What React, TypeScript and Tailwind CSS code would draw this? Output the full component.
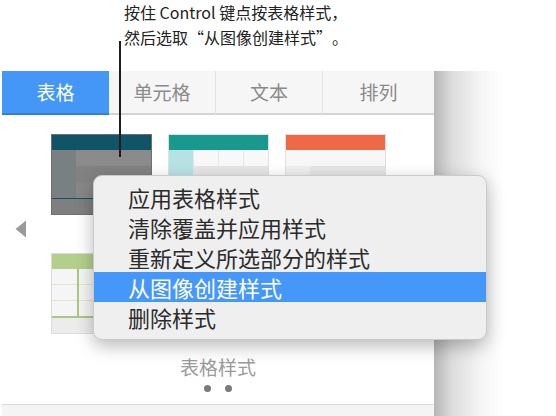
import React from "react";

const tabs = ["表格", "单元格", "文本", "排列"];
const menuItems = ["应用表格样式", "清除覆盖并应用样式", "重新定义所选部分的样式", "从图像创建样式", "删除样式"];

function DarkThumb() {
  return (
    <div className="w-[101px] h-[81px] border border-[#6f6f6f] bg-[#858585] flex flex-col">
      <div className="h-[15px] bg-[#0f5467]" />
      <div className="flex flex-1">
        <div className="w-[24px] bg-[#798082]" />
        <div className="flex-1 flex flex-col">
          <div className="h-[16px] bg-[#8b8b8b]" />
          <div className="h-[16px] bg-[#828282]" />
          <div className="h-[16px] bg-[#878787]" />
        </div>
      </div>
      <div className="h-[1px] bg-[#0f5467]" />
      <div className="h-[16px] bg-[#7f7f7f]" />
    </div>
  );
}

function TealThumb() {
  return (
    <div className="w-[101px] h-[81px] border border-[#e0e0e0] bg-[#f7f7f7] flex flex-col">
      <div className="h-[15px] bg-[#17998d]" />
      <div className="flex flex-1">
        <div className="w-[24px] bg-[#b5e3e4]" />
        {[0, 1, 2].map((c) => (
          <div key={c} className="flex-1 flex flex-col border-l border-[#e6e6e6]">
            <div className="h-[16px] bg-[#f8f8f8]" />
            <div className="h-[16px] bg-[#e6e6e6]" />
            <div className="h-[16px] bg-[#f4f4f4]" />
            <div className="flex-1 bg-[#e6e6e6]" />
          </div>
        ))}
      </div>
    </div>
  );
}

function OrangeThumb() {
  return (
    <div className="w-[101px] h-[81px] border border-[#e0e0e0] bg-[#f7f7f7] flex flex-col">
      <div className="h-[15px] bg-[#ef6946]" />
      <div className="h-[16px] bg-[#f7f7f7]" />
      <div className="flex h-[16px]">
        <div className="w-[24px] bg-[#efefef]" />
        <div className="flex-1 bg-[#e5e5e5]" />
      </div>
      <div className="flex-1 bg-[#f2f2f2]" />
    </div>
  );
}

function GreenThumb() {
  return (
    <div className="w-[101px] h-[81px] border border-[#dcdcdc] bg-[#f5f5f5] flex flex-col">
      <div className="h-[15px] bg-[#b2d08b]" />
      <div className="flex flex-1">
        <div className="w-[25px] flex flex-col">
          <div className="h-[16px] border-b border-[#dce8cb]" />
          <div className="h-[16px] border-b border-[#dce8cb]" />
          <div className="flex-1" />
        </div>
        <div className="w-[2px] bg-[#a9c982]" />
        <div className="flex-1 flex flex-col">
          <div className="h-[16px] border-b border-[#dce8cb]" />
          <div className="h-[16px] border-b border-[#dce8cb]" />
          <div className="flex-1" />
        </div>
      </div>
      <div className="h-[2px] bg-[#a9c982]" />
      <div className="h-[15px] bg-[#ececec]" />
    </div>
  );
}

export default function App() {
  return (
    <div
      className="relative w-[556px] h-[416px] overflow-hidden bg-white flex flex-col"
      style={{ fontFamily: '"Noto Sans CJK SC", "Noto Sans", sans-serif' }}
    >
      <div className="h-[71px] pl-[124px] text-[16px] leading-[25px] text-[#222]">
        <p>按住 Control 键点按表格样式，</p>
        <p>
          然后选取<span className="inline-block w-[16px] text-right">“</span>从图像创建样式
          <span className="inline-block w-[16px] text-left">”</span>。
        </p>
      </div>

      <div className="flex flex-1">
        <div className="ml-[2px] w-[432px] flex flex-col bg-white">
          <div className="flex h-[44px]">
            {tabs.map((t, i) => (
              <div
                key={t}
                className={
                  i === 0
                    ? "w-[107px] flex items-center justify-center bg-[#4497f6] border-b-2 border-[#2f7fdc] text-white text-[19px]"
                    : i === 3
                      ? "flex-1 flex items-center justify-center bg-[#f6f6f6] border-b-2 border-[#d3d3d3] text-[#8a8a8a] text-[19px]"
                      : "w-[107px] flex items-center justify-center bg-[#f6f6f6] border-b-2 border-r border-[#d3d3d3] border-r-[#e2e2e2] text-[#8a8a8a] text-[19px]"
                }
              >
                {t}
              </div>
            ))}
          </div>

          <div className="relative flex-1 flex flex-col items-center">
            <div className="mt-[19px] grid grid-cols-[101px_101px_101px] gap-x-[16px] gap-y-[38px] ml-[1px]">
              <DarkThumb />
              <TealThumb />
              <OrangeThumb />
              <GreenThumb />
              <TealThumb />
              <OrangeThumb />
            </div>
            <div className="mt-[21px] text-[19px] leading-[24px] text-[#9b9b9b]">表格样式</div>
            <div className="mt-[6px] flex gap-[14px]">
              <span className="w-[7px] h-[7px] rounded-full bg-[#7a7a7a]" />
              <span className="w-[7px] h-[7px] rounded-full bg-[#7a7a7a]" />
            </div>
            <svg className="absolute left-[13px] top-[105px]" width="12" height="18" viewBox="0 0 12 18">
              <path d="M11 0.5 L0.5 9 L11 17.5 Z" fill="#9a9a9a" />
            </svg>
          </div>

          <div className="h-[12px] border-t border-[#d9d9d9] bg-[#f4f4f4]" />
        </div>
        <div className="flex-1 bg-[linear-gradient(to_right,#b6b6b6_0px,#dcdcdc_18px,#f4f4f4_45px,#ffffff_70px)]" />
      </div>

      <div className="absolute left-[119px] top-[41px] w-[2px] h-[116px] bg-[#1e1e1e]" />

      <div className="absolute left-[93px] top-[175px] w-[394px] h-[165px] rounded-[9px] border border-[#cacaca] bg-[#efefef] py-[6px] shadow-[0_6px_18px_rgba(0,0,0,0.28)]">
        {menuItems.map((m, i) => (
          <div
            key={m}
            className={
              i === 3
                ? "h-[30px] pl-[34px] text-[22px] leading-[30px] bg-[#4597fa] text-white"
                : "h-[30px] pl-[34px] text-[22px] leading-[30px] text-[#2b2b2b]"
            }
          >
            {m}
          </div>
        ))}
      </div>
    </div>
  );
}
